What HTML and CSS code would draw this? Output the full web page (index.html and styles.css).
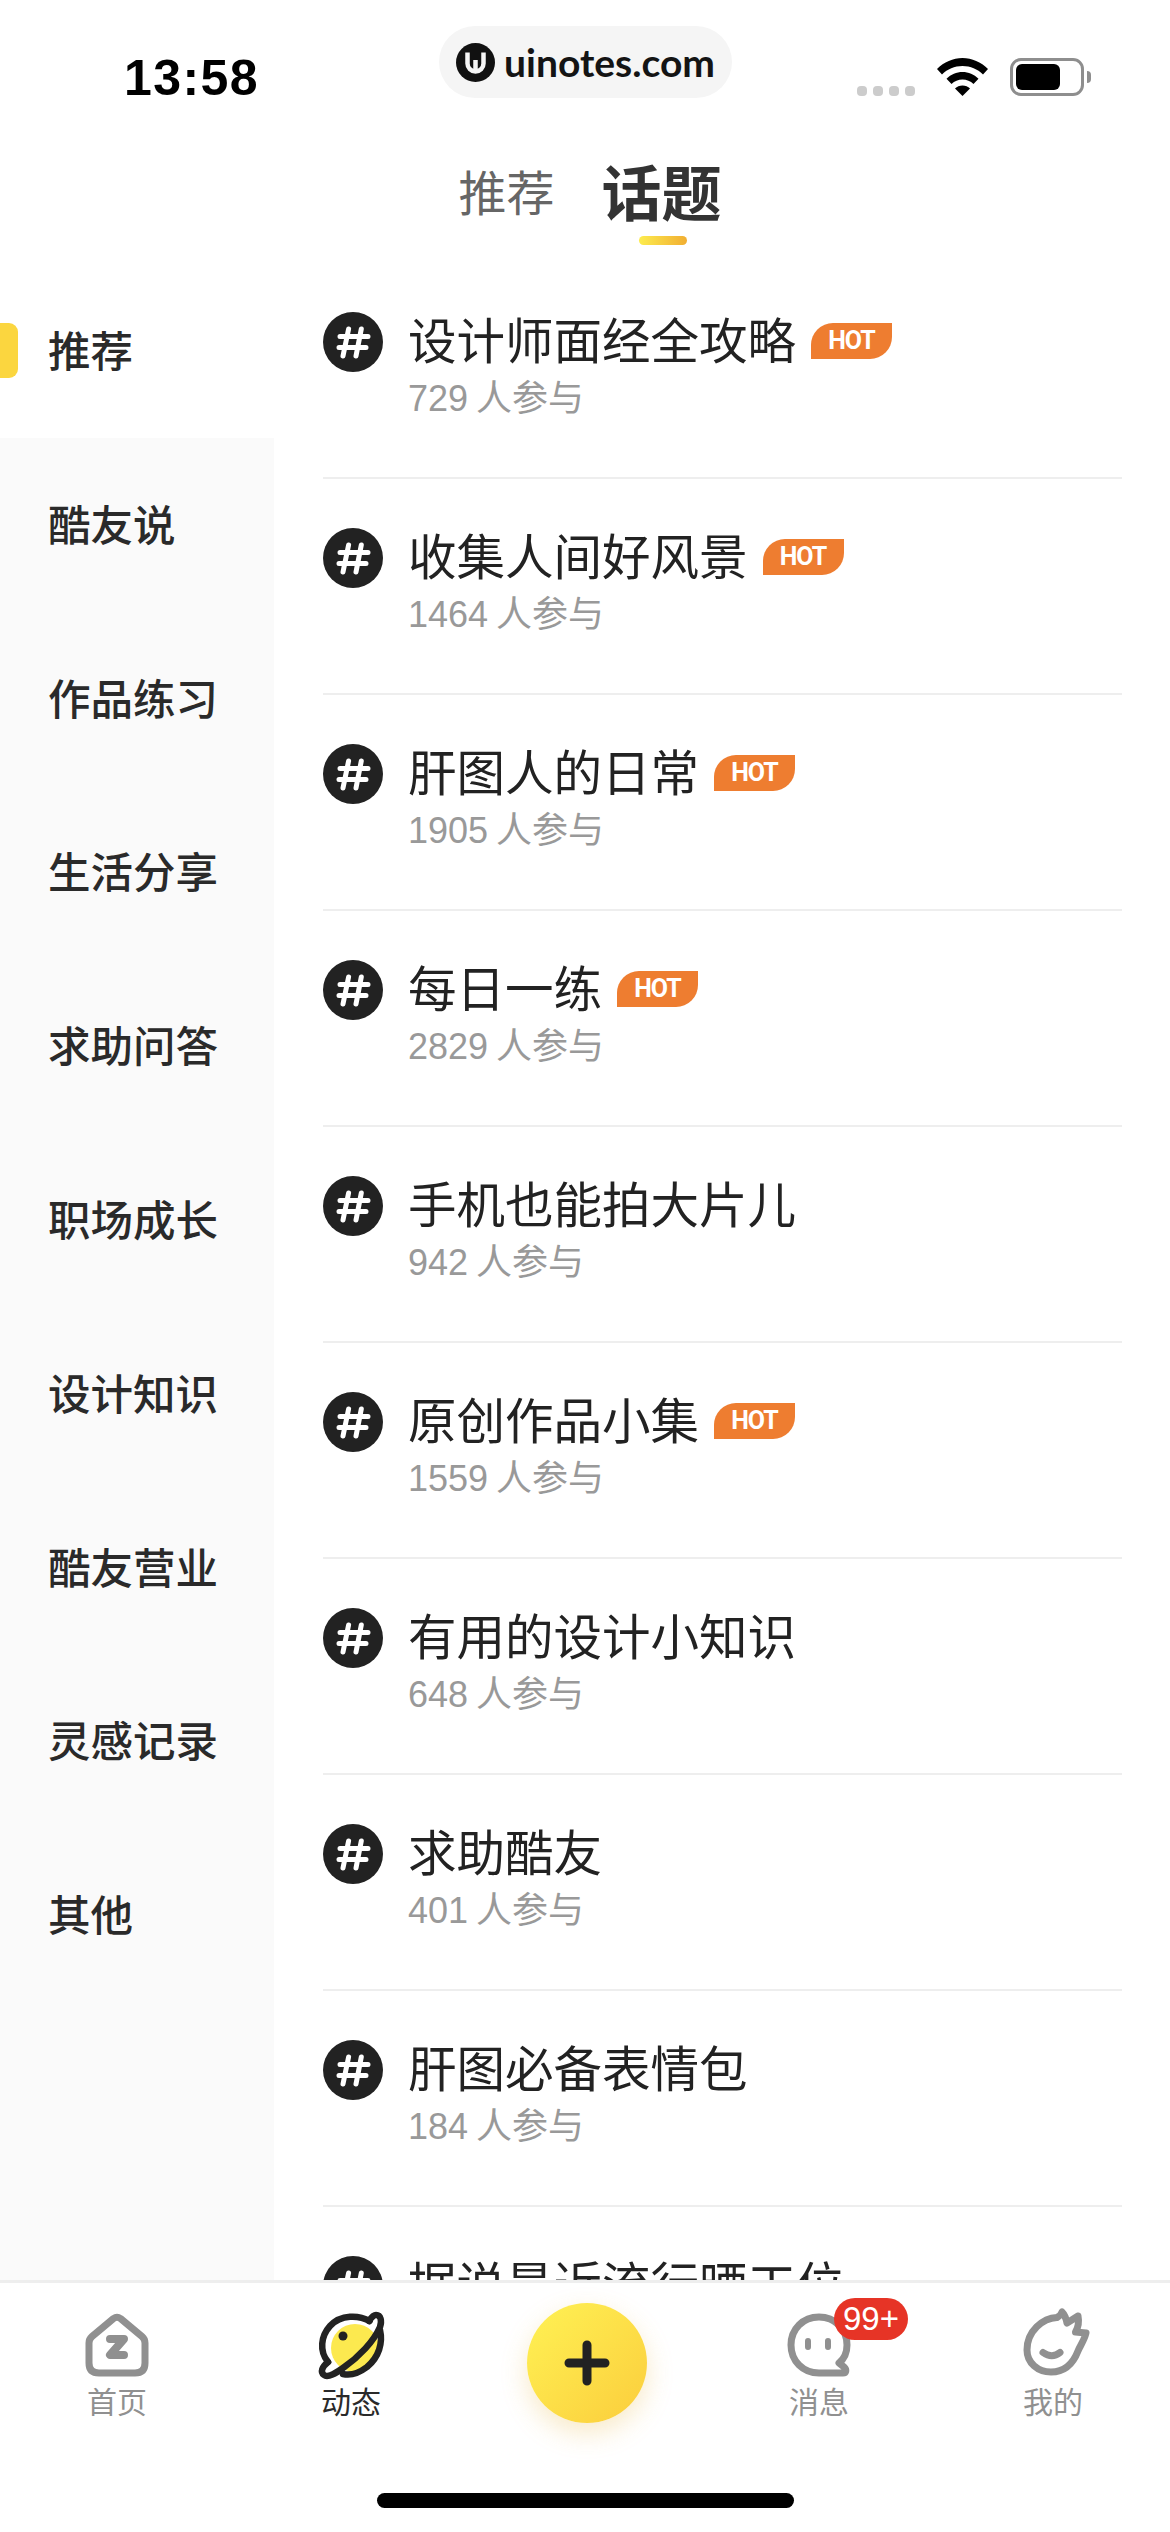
FILE: index.html
```html
<!DOCTYPE html>
<html lang="zh">
<head>
<meta charset="utf-8">
<title>话题</title>
<link rel="stylesheet" href="styles.css">
</head>
<body>
<div class="page">
  <header class="top">
    <div class="status">
      <div class="time">13:58</div>
      <div class="brand">
        <svg class="brand-logo" viewBox="0 0 39 39"><circle cx="19.500" cy="19.500" r="19.500" fill="#111"/><path class="logo-u" d="M11.500 9.500V20.500a8 8 0 0 0 16 0V9.500M19.500 17V27"/></svg>
        <span>uinotes.com</span>
      </div>
      <div class="sys">
        <div class="dots"><i></i><i></i><i></i><i></i></div>
        <svg class="wifi" viewBox="0 0 51 38"><path d="M25.500 0C35 0 44 4 51 11l-5 5.500C40.500 11 33.500 8 25.500 8S10.500 11 5 16.500L0 11C7 4 16 0 25.500 0z"/><path d="M25.500 14c6 0 11.500 2.400 16 6.700l-5 5.300c-3-3-6.800-4.600-11-4.600s-8 1.600-11 4.600l-5-5.300C14 16.400 19.500 14 25.500 14z"/><path d="M25.500 27.500c3 0 5.500 1 7.500 3L25.500 38 18 30.500c2-2 4.500-3 7.500-3z"/></svg>
        <div class="battery"><div class="battery-fill"></div></div>
        <div class="battery-cap"></div>
      </div>
    </div>
    <nav class="tabs">
      <span class="tab">推荐</span>
      <span class="tab tab-on">话题</span>
    </nav>
  </header>

  <main class="main">
    <aside class="side">
      <div class="side-item side-on">推荐</div>
      <div class="side-item">酷友说</div>
      <div class="side-item">作品练习</div>
      <div class="side-item">生活分享</div>
      <div class="side-item">求助问答</div>
      <div class="side-item">职场成长</div>
      <div class="side-item">设计知识</div>
      <div class="side-item">酷友营业</div>
      <div class="side-item">灵感记录</div>
      <div class="side-item">其他</div>
    </aside>
    <section class="list">
      <article class="row"><div class="hash"><svg viewBox="0 0 60 60"><path d="M25.600 17L20 44M38.300 17L33 44M17 24.500H45M16 35.500H43"/></svg></div><div class="row-body"><div class="row-title"><span>设计师面经全攻略</span><b class="hot">HOT</b></div><div class="row-sub">729<span>人参与</span></div></div></article>
      <article class="row"><div class="hash"><svg viewBox="0 0 60 60"><path d="M25.600 17L20 44M38.300 17L33 44M17 24.500H45M16 35.500H43"/></svg></div><div class="row-body"><div class="row-title"><span>收集人间好风景</span><b class="hot">HOT</b></div><div class="row-sub">1464<span>人参与</span></div></div></article>
      <article class="row"><div class="hash"><svg viewBox="0 0 60 60"><path d="M25.600 17L20 44M38.300 17L33 44M17 24.500H45M16 35.500H43"/></svg></div><div class="row-body"><div class="row-title"><span>肝图人的日常</span><b class="hot">HOT</b></div><div class="row-sub">1905<span>人参与</span></div></div></article>
      <article class="row"><div class="hash"><svg viewBox="0 0 60 60"><path d="M25.600 17L20 44M38.300 17L33 44M17 24.500H45M16 35.500H43"/></svg></div><div class="row-body"><div class="row-title"><span>每日一练</span><b class="hot">HOT</b></div><div class="row-sub">2829<span>人参与</span></div></div></article>
      <article class="row"><div class="hash"><svg viewBox="0 0 60 60"><path d="M25.600 17L20 44M38.300 17L33 44M17 24.500H45M16 35.500H43"/></svg></div><div class="row-body"><div class="row-title"><span>手机也能拍大片儿</span></div><div class="row-sub">942<span>人参与</span></div></div></article>
      <article class="row"><div class="hash"><svg viewBox="0 0 60 60"><path d="M25.600 17L20 44M38.300 17L33 44M17 24.500H45M16 35.500H43"/></svg></div><div class="row-body"><div class="row-title"><span>原创作品小集</span><b class="hot">HOT</b></div><div class="row-sub">1559<span>人参与</span></div></div></article>
      <article class="row"><div class="hash"><svg viewBox="0 0 60 60"><path d="M25.600 17L20 44M38.300 17L33 44M17 24.500H45M16 35.500H43"/></svg></div><div class="row-body"><div class="row-title"><span>有用的设计小知识</span></div><div class="row-sub">648<span>人参与</span></div></div></article>
      <article class="row"><div class="hash"><svg viewBox="0 0 60 60"><path d="M25.600 17L20 44M38.300 17L33 44M17 24.500H45M16 35.500H43"/></svg></div><div class="row-body"><div class="row-title"><span>求助酷友</span></div><div class="row-sub">401<span>人参与</span></div></div></article>
      <article class="row"><div class="hash"><svg viewBox="0 0 60 60"><path d="M25.600 17L20 44M38.300 17L33 44M17 24.500H45M16 35.500H43"/></svg></div><div class="row-body"><div class="row-title"><span>肝图必备表情包</span></div><div class="row-sub">184<span>人参与</span></div></div></article>
      <article class="row"><div class="hash"><svg viewBox="0 0 60 60"><path d="M25.600 17L20 44M38.300 17L33 44M17 24.500H45M16 35.500H43"/></svg></div><div class="row-body"><div class="row-title"><span>据说最近流行晒工位</span></div></div></article>
    </section>
  </main>

  <footer class="bar">
    <div class="bar-items">
      <div class="bar-item">
        <svg class="ico" viewBox="0 0 64 64"><path class="ln" d="M28.500 5.500L7 23.500Q4 26 4 30V50Q4 60 14 60H50Q60 60 60 50V30Q60 26 57 23.500L35.500 5.500Q32 3 28.500 5.500Z"/><path class="ln z" d="M25 26H39L25 42H39"/></svg>
        <span>首页</span>
      </div>
      <div class="bar-item bar-on">
        <svg class="ico" viewBox="0 0 64 64"><circle cx="36" cy="35" r="24" fill="#fce94f"/><path class="ln dark" d="M50.700 8C40 2 22 1 11 13C2 23 0 38 9 49"/><path class="ln dark" d="M9 49C3 54 1 59 5 62C9 65 17 60 24 55C40 44 55 28 61 14C63 8 62 2 57 2C54 2 52 5 50 8"/><path class="ln dark" d="M61 17C64 30 60 44 48 54C40 60 32 63 24 61"/><circle cx="24" cy="23" r="4.500" fill="#222"/></svg>
        <span>动态</span>
      </div>
      <div class="bar-item bar-add">
        <div class="add"><svg viewBox="0 0 48 48"><path d="M24 6V42M6 24H42"/></svg></div>
      </div>
      <div class="bar-item">
        <div class="msg">
          <svg class="ico" viewBox="0 0 64 64"><path class="ln" d="M60 32C60 16 48 4 32 4S4 16 4 32S16 60 32 60H56C59 60 60 57 57 54L52 50C57 46 60 40 60 32Z"/><path class="ln eye" d="M21 28V34M41 28V34"/></svg>
          <b class="count">99+</b>
        </div>
        <span>消息</span>
      </div>
      <div class="bar-item">
        <svg class="ico me" viewBox="7 6 66 66"><path class="ln" d="M42 13.500C28 14 12 27 12 46C12 59 23 68 36 68C49 68 58 60 63 47C65 42 69 37 71 29L60.500 28C64 22 64 17 63 12L52 19C51 14 49 10 47 8C46 11 45 12 42 13.500Z"/><path class="ln smile" d="M28 48.500Q37 55 45 48.500"/></svg>
        <span>我的</span>
      </div>
    </div>
    <div class="home-bar"></div>
  </footer>
</div>
</body>
</html>
```

FILE: styles.css
```css
* { box-sizing: border-box; }
html, body { margin: 0; padding: 0; background: #fff; }
body { font-family: "Noto Sans CJK SC", "Liberation Sans", sans-serif; color: #222; }
.page { width: 1170px; height: 2532px; display: flex; flex-direction: column; overflow: hidden; background: #fff; }

.top { height: 263px; flex: none; }
.status { height: 126px; padding-top: 26px; display: flex; align-items: flex-start; position: relative; }
.time { font-family: "Liberation Sans", sans-serif; font-size: 50px; line-height: 50px; font-weight: 700; color: #000; margin: 27px 0 0 124px; width: 315px; letter-spacing: 1.400px; }
.brand { width: 293px; height: 72px; border-radius: 36px; background: #f5f5f5; display: flex; align-items: center; padding-left: 17px; gap: 9px; font-family: Lato, sans-serif; font-weight: 700; font-size: 39px; color: #141414; }
.brand-logo { width: 39px; height: 39px; flex: none; }
.logo-u { fill: none; stroke: #f5f5f5; stroke-width: 4.500; }
.sys { display: flex; align-items: flex-end; margin: 32px 0 0 125px; height: 38px; }
.dots { display: flex; gap: 6px; height: 10px; }
.dots i { width: 10px; height: 10px; border-radius: 4px; background: #ccc; }
.wifi { width: 51px; height: 38px; margin-left: 22px; fill: #000; }
.battery { width: 74px; height: 38px; margin-left: 22px; border: 3px solid #8e8e8e; border-radius: 11px; padding: 3px; }
.battery-fill { width: 44px; height: 26px; border-radius: 6px; background: #000; }
.battery-cap { width: 4px; height: 12px; margin: 0 0 13px 3px; border-radius: 0 6px 6px 0; background: #8e8e8e; }

.tabs { display: flex; justify-content: center; align-items: center; height: 92px; gap: 47px; padding-left: 10px; margin-top: 18px; }
.tab { font-size: 48px; line-height: 60px; color: #666; }
.tab-on { font-size: 60px; font-weight: 700; color: #333; position: relative; }
.tab-on::after { content: ""; position: absolute; left: 37px; top: 76px; width: 48px; height: 9px; border-radius: 5px; background: linear-gradient(90deg, #fdec4e, #f1ae32); }

.main { flex: 1; display: flex; min-height: 0; overflow: hidden; }
.side { width: 274px; flex: none; background: #fafafa; }
.side-item { height: 173.800px; padding: 0 0 5px 48px; display: flex; align-items: center; font-size: 42.500px; font-weight: 500; color: #2a2a2a; position: relative; }
.side-on { background: #fff; height: 175px; }
.side-on::before { content: ""; position: absolute; left: 0; top: 60px; width: 18px; height: 55px; border-radius: 0 9px 9px 0; background: #fbd63f; }

.list { flex: 1; padding: 0 48px 0 49px; overflow: hidden; }
.row { height: 216px; padding-top: 49px; border-bottom: 2px solid #eee; display: flex; gap: 25px; }
.hash { width: 60px; height: 60px; border-radius: 50%; background: #222; flex: none; }
.hash svg { width: 60px; height: 60px; display: block; fill: none; stroke: #fff; stroke-width: 5; stroke-linecap: round; }
.row-body { flex: 1; min-width: 0; }
.row-title { display: flex; align-items: center; font-size: 48.500px; line-height: 58px; color: #222; height: 58px; margin-top: -3px; }
.hot { width: 81px; height: 36px; margin: 5px 0 0 15px; background: #ee7d30; color: #fff; font-family: Roboto, sans-serif; font-weight: 700; font-size: 25px; letter-spacing: -1px; line-height: 36px; text-align: center; border-radius: 22px 0 22px 0; }
.row-sub { font-family: "Liberation Sans", "Noto Sans CJK SC", sans-serif; font-size: 36px; line-height: 42px; color: #999; margin-top: 7px; }
.row-sub span { font-family: "Noto Sans CJK SC", sans-serif; margin-left: 8px; }

.bar { height: 252px; flex: none; border-top: 3px solid #eee; background: #fff; position: relative; }
.bar-items { display: grid; grid-template-columns: repeat(5, 234px); padding-top: 30px; }
.bar-item { display: flex; flex-direction: column; align-items: center; font-size: 30px; line-height: 36px; color: #909090; }
.bar-item span { margin-top: 5px; }
.bar-on { color: #2a2a2a; }
.ico { width: 64px; height: 64px; display: block; fill: none; overflow: visible; }
.ln { fill: none; stroke: #909090; stroke-width: 7; stroke-linecap: round; stroke-linejoin: round; }
.ln.dark { stroke: #222; stroke-width: 6.500; }
.z { stroke-width: 8; }
.eye { stroke-width: 6; }
.me { width: 66px; height: 66px; margin: -3px 0 1px 4px; }
.msg { position: relative; width: 64px; height: 64px; }
.count { position: absolute; left: 47px; top: -15px; width: 74px; height: 42px; border-radius: 21px; background: #e63426; color: #fff; font-family: "Liberation Sans", sans-serif; font-weight: 400; font-size: 33px; line-height: 42px; text-align: center; }
.add { width: 120px; height: 120px; border-radius: 50%; margin: -10px 0 0 4px; background: linear-gradient(135deg, #fff254, #fbcd3c); box-shadow: 0 10px 26px rgba(230, 180, 60, .28); display: flex; align-items: center; justify-content: center; }
.add svg { width: 48px; height: 48px; fill: none; stroke: #222; stroke-width: 9; stroke-linecap: round; }
.home-bar { position: absolute; left: 377px; top: 210px; width: 417px; height: 15px; border-radius: 8px; background: #000; }
```
